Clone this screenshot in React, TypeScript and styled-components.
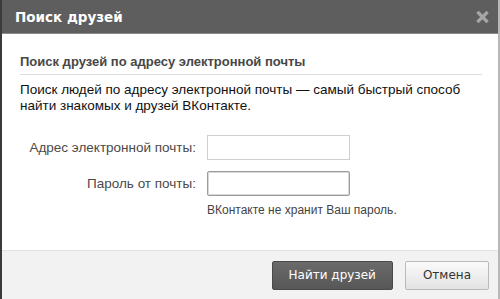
import React from 'react';
import styled, { createGlobalStyle } from 'styled-components';

const GlobalStyle = createGlobalStyle`
  html, body {
    margin: 0;
    padding: 0;
    background: #ffffff;
  }
  body {
    font-family: "Liberation Sans", Arial, sans-serif;
  }
`;

const Dialog = styled.div`
  width: 500px;
  height: 299px;
  box-sizing: border-box;
  display: flex;
  flex-direction: column;
  border-left: 2px solid #3a3a3a;
  border-right: 2px solid #b8b8b8;
  background: #fff;
  overflow: hidden;
`;

const Header = styled.div`
  height: 33px;
  flex-shrink: 0;
  display: flex;
  align-items: center;
  justify-content: space-between;
  padding: 0 9px 0 13px;
  background: #5e5e5e;
  border-bottom: 1px solid #8a8a8a;
`;

const HeaderTitle = styled.div`
  color: #fff;
  font-size: 13.5px;
  font-weight: bold;
  font-family: "DejaVu Sans", "Liberation Sans", sans-serif;
  margin-top: 1px;
`;

const CloseButton = styled.div`
  width: 14px;
  height: 14px;
  display: flex;
  align-items: center;
  justify-content: center;
`;

const Body = styled.div`
  flex: 1;
  padding: 20px 16px 0 18px;
`;

const SectionTitle = styled.div`
  font-size: 13px;
  font-weight: bold;
  color: #474747;
  padding-bottom: 5px;
  border-bottom: 1px solid #dedede;
`;

const Description = styled.div`
  margin-top: 7px;
  font-size: 13.5px;
  line-height: 16px;
  color: #111;
`;

const Form = styled.div`
  margin-top: 21px;
  display: grid;
  grid-template-columns: 176px 143px;
  column-gap: 11px;
  row-gap: 11px;
  align-items: center;
`;

const Label = styled.div`
  text-align: right;
  font-size: 13.5px;
  color: #4a4a4a;
`;

const Input = styled.div<{ focused?: boolean }>`
  height: 25px;
  box-sizing: border-box;
  border: 1px solid ${({ focused }) => (focused ? '#9c9c9c' : '#cfcfcf')};
  border-radius: ${({ focused }) => (focused ? '2px' : '0')};
  background: #fff;
  box-shadow: ${({ focused }) => (focused ? 'inset 0 0 0 1px #d8d8d8' : 'none')};
`;

const Note = styled.div`
  grid-column: 2 / span 1;
  margin-top: -4px;
  font-size: 12px;
  color: #444;
  white-space: nowrap;
`;

const Footer = styled.div`
  height: 49px;
  flex-shrink: 0;
  box-sizing: border-box;
  display: flex;
  align-items: center;
  justify-content: flex-end;
  gap: 12px;
  padding: 0 9px 0 0;
  background: #f2f2f2;
  border-top: 1px solid #e2e2e2;
`;

const Button = styled.div<{ primary?: boolean }>`
  height: 29px;
  box-sizing: border-box;
  display: flex;
  align-items: center;
  justify-content: center;
  padding: 0 ${({ primary }) => (primary ? '16px' : '17px')};
  font-family: "DejaVu Sans", "Liberation Sans", sans-serif;
  font-size: 12px;
  border-radius: 2px;
  color: ${({ primary }) => (primary ? '#fff' : '#333')};
  background: ${({ primary }) =>
    primary ? 'linear-gradient(#6a6a6a, #575757)' : 'linear-gradient(#fafafa, #e3e3e3)'};
  border: 1px solid ${({ primary }) => (primary ? '#4a4a4a' : '#b9b9b9')};
`;

export default function App() {
  return (
    <>
      <GlobalStyle />
      <Dialog>
        <Header>
          <HeaderTitle>Поиск друзей</HeaderTitle>
          <CloseButton>
            <svg width="13" height="12" viewBox="0 0 13 12">
              <path d="M2.5 2 L10.5 10 M10.5 2 L2.5 10" stroke="#a6a6a6" strokeWidth="3.2" strokeLinecap="square" />
            </svg>
          </CloseButton>
        </Header>
        <Body>
          <SectionTitle>Поиск друзей по адресу электронной почты</SectionTitle>
          <Description>
            Поиск людей по адресу электронной почты — самый быстрый способ
            <br />
            найти знакомых и друзей ВКонтакте.
          </Description>
          <Form>
            <Label>Адрес электронной почты:</Label>
            <Input />
            <Label>Пароль от почты:</Label>
            <Input focused />
            <Note>ВКонтакте не хранит Ваш пароль.</Note>
          </Form>
        </Body>
        <Footer>
          <Button primary>Найти друзей</Button>
          <Button>Отмена</Button>
        </Footer>
      </Dialog>
    </>
  );
}
